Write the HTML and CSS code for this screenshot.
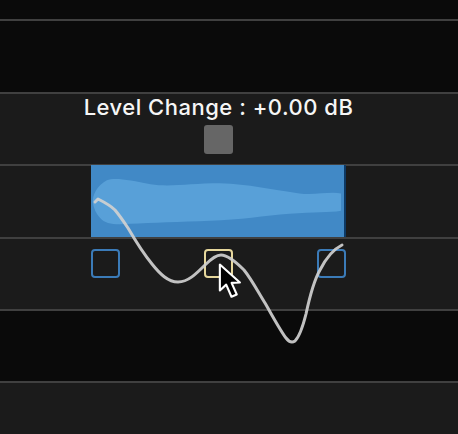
FILE: index.html
```html
<!DOCTYPE html>
<html lang="en">

<head>
    <meta charset="UTF-8">
    <title>Level Change</title>
    <link rel="stylesheet" href="styles.css">
</head>

<body>
    <div class="tracks">
        <div class="track dark t0"></div>
        <div class="track dark t1"></div>

        <div class="track light t2">
            <div class="lane gain">
                <span class="gain-label">Level Change : +0.00 dB</span>
                <div class="gain-knob"></div>
            </div>
        </div>

        <div class="track light t3">
            <div class="lane">
                <div class="clip">
                    <svg class="wave" viewBox="0 0 255 71" preserveAspectRatio="none">
                        <path d="M2 38 C1 30 6 20 16 15 C24 12 40 15 60 19 C80 22 100 18 130 18 C160 19 180 24 210 28 C225 30 240 26 252 28 L252 45 C240 47 225 46 200 48 C175 50 150 54 120 55 C90 56 60 57 40 58 C25 59 15 59 9 52 C5 48 3 43 2 38 Z" fill="#58a0d8"/>
                    </svg>
                </div>
            </div>
        </div>

        <div class="track light t4">
            <div class="lane handles">
                <div class="handle"></div>
                <div class="handle active"></div>
                <div class="handle"></div>
            </div>
        </div>

        <div class="track dark t5"></div>
        <div class="track light t6"></div>
    </div>

    <!-- envelope drawn on top of the tracks -->
    <svg class="envelope" width="458" height="434" viewBox="0 0 458 434">
        <path d="M95 202 L98 199 C104 202 110 205 115 210 C120 216 124 222 128 228 C135 240 143 253 152 264 C160 274 168 282 178 282 C188 282 196 274 205 265 C211 259 216 255 221 255 C228 255 236 262 244 270 C252 280 258 292 265 303 C272 315 280 330 286 338 C289 342 292 343 295 341 C300 336 303 326 306 314 C309 300 313 282 320 270 C326 258 332 250 342 245"
              fill="none" stroke="#d0d0d0" stroke-opacity="0.92" stroke-width="3" stroke-linecap="round" stroke-linejoin="round"/>
    </svg>

    <svg class="cursor" width="28" height="38" viewBox="0 0 26 36">
        <path d="M1.5 1.5 L1.5 26 L7.5 20.5 L12.5 32 L17.5 29.8 L12.6 18.8 L20.5 18.5 Z"
              fill="#000" stroke="#fff" stroke-width="2" stroke-linejoin="round"/>
    </svg>
</body>

</html>
```

FILE: styles.css
```css
body {
    margin: 0;
    width: 458px;
    height: 434px;
    overflow: hidden;
    background-color: #1b1b1b;
    font-family: Inter, "Liberation Sans", sans-serif;
    position: relative;
}

.tracks {
    display: flex;
    flex-direction: column;
}

.track {
    border-bottom: 2px solid #404040;
    display: flex;
}

.dark {
    background-color: #0a0a0a;
}

.light {
    background-color: #1b1b1b;
}

.t0 { height: 19px; }
.t1 { height: 71px; }
.t2 { height: 70px; }
.t3 { height: 71px; }
.t4 { height: 70px; }
.t5 { height: 70px; }
.t6 { height: 60px; border-bottom: none; }

.lane {
    margin-left: 91px;
    width: 255px;
    display: flex;
}

.gain {
    flex-direction: column;
    align-items: center;
}

.gain-label {
    white-space: nowrap;
    color: #f6f6f6;
    font-size: 22px;
    font-weight: 500;
    line-height: 24px;
    margin-top: 1px;
    letter-spacing: 0.5px;
}

.gain-knob {
    width: 29px;
    height: 29px;
    margin-top: 6px;
    background-color: #666666;
    border-radius: 3px;
}

.clip {
    width: 255px;
    height: 72px;
    margin-top: -1px;
    background-color: #4189c6;
    border-right: 2px solid #0d3a66;
    box-sizing: border-box;
}

.wave {
    display: block;
    width: 253px;
    height: 72px;
}

.handles {
    justify-content: space-between;
    padding-top: 10px;
    box-sizing: border-box;
}

.handle {
    width: 29px;
    height: 29px;
    box-sizing: border-box;
    border: 2.5px solid #3b7bb8;
    border-radius: 4px;
}

.handle.active {
    border-color: #e6d79c;
}

.envelope {
    position: absolute;
    left: 0;
    top: 0;
}

.cursor {
    position: absolute;
    left: 218px;
    top: 263px;
}
```
